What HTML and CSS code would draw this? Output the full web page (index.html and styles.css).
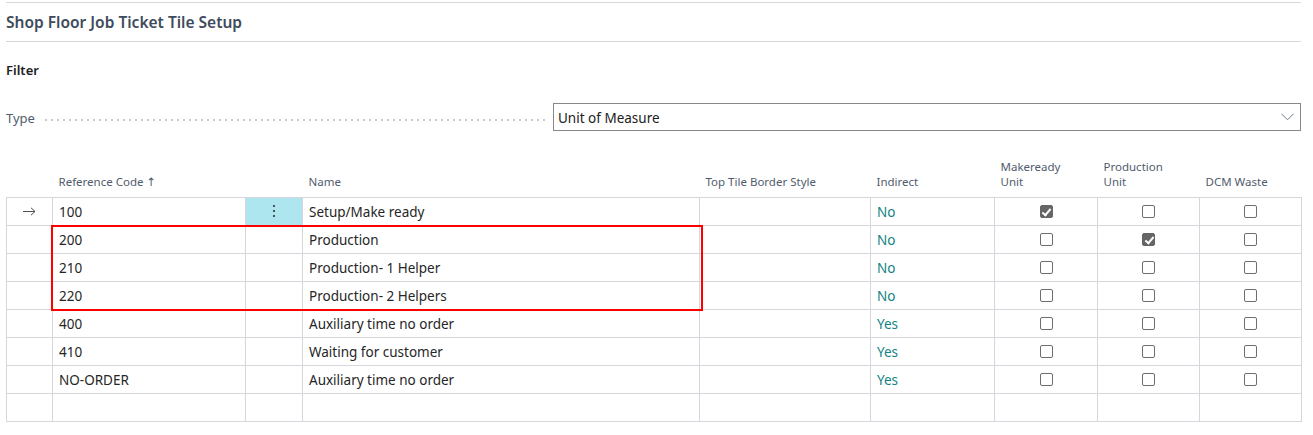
FILE: index.html
```html
<!DOCTYPE html>
<html>
<head>
<meta charset="utf-8">
<link rel="stylesheet" href="styles.css">
</head>
<body>
<div class="page">
  <header class="title-bar">
    <h1 class="title">Shop Floor Job Ticket Tile Setup</h1>
  </header>
  <section class="filter">
    <h2 class="filter-title">Filter</h2>
    <div class="field">
      <label class="field-label">Type</label>
      <span class="leader"></span>
      <div class="select">
        <span class="select-value">Unit of Measure</span>
        <svg class="chevron" width="13" height="8" viewBox="0 0 13 8"><polyline points="0.5,0.8 6.5,6.8 12.5,0.8" fill="none" stroke="#6b7a8c" stroke-width="1"/></svg>
      </div>
    </div>
  </section>
  <div class="grid-wrap">
    <table class="grid">
      <colgroup>
        <col class="c-mark"><col class="c-code"><col class="c-menu"><col class="c-name"><col class="c-border"><col class="c-ind"><col class="c-mk"><col class="c-chk"><col class="c-chk">
      </colgroup>
      <thead>
        <tr>
          <th></th>
          <th>Reference Code ↑</th>
          <th></th>
          <th>Name</th>
          <th>Top Tile Border Style</th>
          <th>Indirect</th>
          <th>Makeready<br>Unit</th>
          <th>Production<br>Unit</th>
          <th>DCM Waste</th>
        </tr>
      </thead>
      <tbody>
        <tr>
          <td class="mark"><svg width="13" height="9" viewBox="0 0 13 9"><path d="M0 4.5H12M8 0.8L12 4.5L8 8.2" fill="none" stroke="#505050" stroke-width="1"/></svg></td>
          <td>100</td>
          <td class="menu active"><svg width="4" height="14" viewBox="0 0 4 14"><circle cx="2" cy="2" r="1.1" fill="#333"/><circle cx="2" cy="7" r="1.1" fill="#333"/><circle cx="2" cy="12" r="1.1" fill="#333"/></svg></td>
          <td>Setup/Make ready</td>
          <td></td>
          <td class="link">No</td>
          <td class="chk"><span class="box on"></span></td>
          <td class="chk"><span class="box"></span></td>
          <td class="chk"><span class="box"></span></td>
        </tr>
        <tr>
          <td class="mark"></td><td>200</td><td class="menu"></td><td>Production</td><td></td><td class="link">No</td>
          <td class="chk"><span class="box"></span></td><td class="chk"><span class="box on"></span></td><td class="chk"><span class="box"></span></td>
        </tr>
        <tr>
          <td class="mark"></td><td>210</td><td class="menu"></td><td>Production- 1 Helper</td><td></td><td class="link">No</td>
          <td class="chk"><span class="box"></span></td><td class="chk"><span class="box"></span></td><td class="chk"><span class="box"></span></td>
        </tr>
        <tr>
          <td class="mark"></td><td>220</td><td class="menu"></td><td>Production- 2 Helpers</td><td></td><td class="link">No</td>
          <td class="chk"><span class="box"></span></td><td class="chk"><span class="box"></span></td><td class="chk"><span class="box"></span></td>
        </tr>
        <tr>
          <td class="mark"></td><td>400</td><td class="menu"></td><td>Auxiliary time no order</td><td></td><td class="link">Yes</td>
          <td class="chk"><span class="box"></span></td><td class="chk"><span class="box"></span></td><td class="chk"><span class="box"></span></td>
        </tr>
        <tr>
          <td class="mark"></td><td>410</td><td class="menu"></td><td>Waiting for customer</td><td></td><td class="link">Yes</td>
          <td class="chk"><span class="box"></span></td><td class="chk"><span class="box"></span></td><td class="chk"><span class="box"></span></td>
        </tr>
        <tr>
          <td class="mark"></td><td>NO-ORDER</td><td class="menu"></td><td>Auxiliary time no order</td><td></td><td class="link">Yes</td>
          <td class="chk"><span class="box"></span></td><td class="chk"><span class="box"></span></td><td class="chk"><span class="box"></span></td>
        </tr>
        <tr>
          <td class="mark"></td><td></td><td class="menu"></td><td></td><td></td><td></td><td></td><td></td><td></td>
        </tr>
      </tbody>
    </table>
    <div class="highlight"></div>
  </div>
</div>
</body>
</html>
```
FILE: styles.css
```css
* { box-sizing: border-box; }
html, body { margin: 0; padding: 0; background: #fff; }
body {
  font-family: "Noto Sans", "Open Sans", "DejaVu Sans", sans-serif;
  color: #212121;
}
.page {
  width: 1301px;
  padding: 2px 0 0 6px;
}
.title-bar {
  border-top: 1px solid #d6d6dc;
  border-bottom: 1px solid #d6d6dc;
  height: 40px;
  display: flex;
  align-items: center;
}
.title {
  margin: 0;
  font-size: 15.5px;
  font-weight: 600;
  color: #3e4b5c;
  line-height: 20px;
}
.filter { padding-top: 18px; }
.filter-title {
  margin: 0;
  font-size: 13px;
  font-weight: 600;
  color: #212121;
  line-height: 20px;
}
.field {
  margin-top: 23px;
  display: flex;
  align-items: center;
  height: 28px;
}
.field-label {
  font-size: 13px;
  color: #505c6d;
  width: 39px;
  flex: none;
  padding-top: 2px;
}
.leader {
  flex: none;
  width: 500px;
  height: 2px;
  margin-top: 6px;
  background-image: linear-gradient(to right, #cacaca 2px, transparent 2px);
  background-size: 6px 2px;
  background-repeat: repeat-x;
}
.select {
  margin-left: 8px;
  flex: 1;
  height: 28px;
  border: 1px solid #8a8886;
  display: flex;
  align-items: center;
  justify-content: space-between;
  padding: 0 6px 0 4px;
}
.select-value { font-size: 13.5px; color: #212121; padding-top: 1px; }
.chevron { display: block; }
.grid-wrap {
  position: relative;
  margin-top: 24px;
}
.grid {
  border-collapse: collapse;
  table-layout: fixed;
  width: 1295px;
}
.c-mark { width: 46px; }
.c-code { width: 193px; }
.c-menu { width: 57px; }
.c-name { width: 397px; }
.c-border { width: 171px; }
.c-ind { width: 124px; }
.c-mk { width: 103px; }
.c-chk { width: 102px; }
.grid th {
  font-size: 11.5px;
  font-weight: 400;
  color: #505c6d;
  text-align: left;
  vertical-align: bottom;
  line-height: 15px;
  padding: 0 4px 8px 6px;
  height: 42px;
  border-bottom: 1px solid #d6d6dc;
}
.grid td {
  height: 28px;
  padding: 1px 6px 0;
  border: 1px solid #d6d6dc;
  font-size: 13.5px;
  line-height: 18px;
  color: #262626;
  white-space: nowrap;
  vertical-align: middle;
}
.grid td.mark { text-align: center; padding: 0; }
.grid td.mark svg { display: block; margin: 1px auto 0; }
.grid td.menu { padding: 0; text-align: center; }
.grid td.menu svg { display: block; margin: 0 auto; }
.grid td.active { background: #ade6ee; }
.grid td.link { color: #138385; }
.grid td.chk { text-align: center; padding: 0; }
.box {
  display: inline-block;
  width: 13px;
  height: 13px;
  border: 1px solid #6e6e6e;
  border-radius: 2px;
  vertical-align: middle;
  position: relative;
  top: -1px;
}
.box.on {
  background: #666;
  border-color: #666;
}
.box.on::after {
  content: "";
  position: absolute;
  left: 3.5px;
  top: 1px;
  width: 3px;
  height: 7px;
  border: solid #fff;
  border-width: 0 2px 2px 0;
  transform: rotate(40deg);
}
.highlight {
  position: absolute;
  left: 45px;
  top: 70px;
  width: 652px;
  height: 86px;
  border: 2px solid #f00;
  pointer-events: none;
}
```
